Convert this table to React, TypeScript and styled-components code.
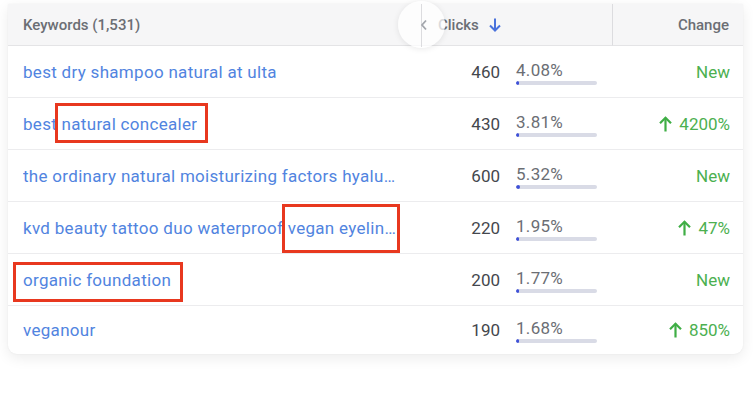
import React from "react";
import styled, { createGlobalStyle } from "styled-components";

const Global = createGlobalStyle`
  html, body { margin: 0; padding: 0; background: #ffffff; }
  body { font-family: Roboto, "Noto Sans", "Liberation Sans", sans-serif; }
`;

const Page = styled.div`
  width: 753px;
  height: 404px;
  padding: 4px 10px 0 8px;
  box-sizing: border-box;
  overflow: hidden;
`;

const Card = styled.div`
  width: 735px;
  background: #fff;
  border-radius: 0 0 9px 9px;
  box-shadow: 0 4px 14px rgba(0, 0, 0, 0.08), 0 0 2px rgba(0, 0, 0, 0.06);
  position: relative;
`;

const Grid = styled.div`
  display: grid;
  grid-template-columns: 414px 190px 1fr;
`;

const HeadCell = styled.div<{ $align?: string; $divider?: boolean }>`
  height: 42px;
  box-sizing: border-box;
  background: #f6f6f7;
  border-bottom: 1px solid #e4e4e6;
  border-left: ${(p) => (p.$divider ? "1px solid #dcdcdf" : "none")};
  display: flex;
  align-items: center;
  justify-content: ${(p) => p.$align || "flex-start"};
  padding: 0 14px 0 15px;
  font-size: 15px;
  font-weight: 500;
  color: #6b6e74;
  position: relative;
`;

const ClicksHead = styled(HeadCell)`
  padding-left: 16px;
  gap: 10px;
`;

const ScrollBtn = styled.div`
  position: absolute;
  left: -24px;
  top: -3px;
  width: 47px;
  height: 47px;
  border-radius: 50%;
  background: rgba(255, 255, 255, 0.75);
  box-shadow: 0 1px 6px rgba(0, 0, 0, 0.09);
  display: flex;
  align-items: center;
  justify-content: center;
  color: #a3a6ac;
  &::after {
    content: "";
    position: absolute;
    left: 23px;
    top: 3px;
    bottom: 1px;
    width: 1px;
    background: #dcdcdf;
  }
`;

const Cell = styled.div<{ $last?: boolean }>`
  height: ${(p) => (p.$last ? "48px" : "52px")};
  box-sizing: border-box;
  border-bottom: ${(p) => (p.$last ? "none" : "1px solid #ececee")};
  display: flex;
  align-items: center;
  position: relative;
`;

const KeywordCell = styled(Cell)`
  padding: 0 17px 0 15px;
`;

const Keyword = styled.span`
  display: block;
  font-size: 17px;
  letter-spacing: 0.3px;
  color: #5184e0;
  white-space: nowrap;
  overflow: hidden;
  text-overflow: ellipsis;
  max-width: 377px;
`;

const Highlight = styled.div`
  position: absolute;
  border: 3px solid #e8381f;
  box-sizing: border-box;
  pointer-events: none;
`;

const ClicksCell = styled(Cell)`
  gap: 16px;
`;

const Count = styled.span`
  width: 78px;
  text-align: right;
  font-size: 17px;
  color: #44474d;
`;

const Share = styled.div`
  width: 81px;
  display: flex;
  flex-direction: column;
  gap: 1px;
  margin-top: 2px;
`;

const Pct = styled.span`
  font-size: 17px;
  letter-spacing: 0.3px;
  color: #6b6e74;
  line-height: 19px;
`;

const Bar = styled.div`
  height: 4px;
  background: #d9dbe6;
  border-radius: 2px;
  overflow: hidden;
`;

const Fill = styled.div`
  height: 100%;
  background: #3e50d8;
  min-width: 3px;
  border-radius: 2px;
`;

const ChangeCell = styled(Cell)`
  justify-content: flex-end;
  padding-right: 13px;
  font-size: 17px;
  color: #4cb050;
  gap: 7px;
`;

const Up = () => (
  <svg width="13" height="16" viewBox="0 0 13 16" fill="none" stroke="#3fae45" strokeWidth="2.2">
    <path d="M6.5 15.5V1.8" />
    <path d="M1 7.3L6.5 1.8L12 7.3" />
  </svg>
);

const Down = () => (
  <svg width="12" height="14" viewBox="0 0 12 14" fill="none" stroke="#4a72dc" strokeWidth="2">
    <path d="M6 0.5V12.5" />
    <path d="M1 7.5L6 12.5L11 7.5" />
  </svg>
);

const Chevron = () => (
  <svg width="8" height="12" viewBox="0 0 8 12" fill="none" stroke="#a3a6ac" strokeWidth="1.8" style={{ position: "relative", left: "2px", zIndex: 1 }}>
    <path d="M6 1.5L2 6L6 10.5" />
  </svg>
);

type Box = { left: number; top: number; width: number; height: number };
type Row = { kw: string; clicks: number; pct: number; change: string; up?: boolean; box?: Box };

const rows: Row[] = [
  { kw: "best dry shampoo natural at ulta", clicks: 460, pct: 4.08, change: "New" },
  { kw: "best natural concealer", clicks: 430, pct: 3.81, change: "4200%", up: true, box: { left: 47, top: 5, width: 153, height: 40 } },
  { kw: "the ordinary natural moisturizing factors hyaluronic acid", clicks: 600, pct: 5.32, change: "New" },
  { kw: "kvd beauty tattoo duo waterproof vegan eyeliner pencil", clicks: 220, pct: 1.95, change: "47%", up: true, box: { left: 274, top: 2, width: 118, height: 49 } },
  { kw: "organic foundation", clicks: 200, pct: 1.77, change: "New", box: { left: 5, top: 8, width: 170, height: 40 } },
  { kw: "veganour", clicks: 190, pct: 1.68, change: "850%", up: true },
];

export default function App() {
  return (
    <>
      <Global />
      <Page>
        <Card>
          <Grid>
            <HeadCell>Keywords (1,531)</HeadCell>
            <ClicksHead>
              <ScrollBtn>
                <Chevron />
              </ScrollBtn>
              <span>Clicks</span>
              <Down />
            </ClicksHead>
            <HeadCell $align="flex-end" $divider>
              Change
            </HeadCell>
            {rows.map((r, i) => {
              const last = i === rows.length - 1;
              return (
                <React.Fragment key={r.kw}>
                  <KeywordCell $last={last}>
                    <Keyword>{r.kw}</Keyword>
                    {r.box && (
                      <Highlight
                        style={{ left: r.box.left, top: r.box.top, width: r.box.width, height: r.box.height }}
                      />
                    )}
                  </KeywordCell>
                  <ClicksCell $last={last}>
                    <Count>{r.clicks}</Count>
                    <Share>
                      <Pct>{r.pct.toFixed(2)}%</Pct>
                      <Bar>
                        <Fill style={{ width: `${r.pct}%` }} />
                      </Bar>
                    </Share>
                  </ClicksCell>
                  <ChangeCell $last={last}>
                    {r.up && <Up />}
                    <span>{r.change}</span>
                  </ChangeCell>
                </React.Fragment>
              );
            })}
          </Grid>
        </Card>
      </Page>
    </>
  );
}
